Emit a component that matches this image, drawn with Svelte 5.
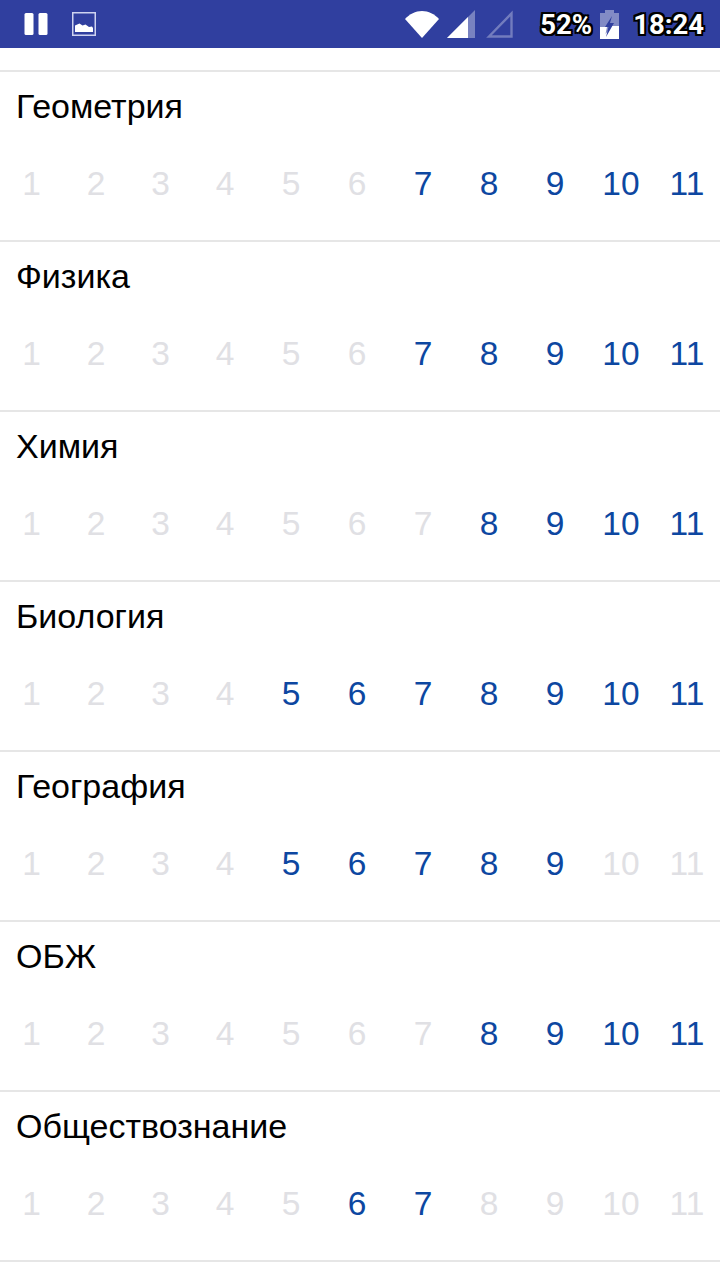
<script lang="ts">
    const subjects = [
        { name: 'Геометрия', on: [7, 8, 9, 10, 11] },
        { name: 'Физика', on: [7, 8, 9, 10, 11] },
        { name: 'Химия', on: [8, 9, 10, 11] },
        { name: 'Биология', on: [5, 6, 7, 8, 9, 10, 11] },
        { name: 'География', on: [5, 6, 7, 8, 9] },
        { name: 'ОБЖ', on: [8, 9, 10, 11] },
        { name: 'Обществознание', on: [6, 7] }
    ];
    const grades = [1, 2, 3, 4, 5, 6, 7, 8, 9, 10, 11];
</script>

<div class="screen">
    <header class="status">
        <div class="left">
            <svg width="24" height="24" viewBox="0 0 24 24">
                <rect x="0.5" y="1" width="9" height="22" rx="1.5" fill="#fff" />
                <rect x="14.5" y="1" width="9" height="22" rx="1.5" fill="#fff" />
            </svg>
            <svg width="24" height="24" viewBox="0 0 24 24">
                <rect x="0.75" y="0.75" width="22.5" height="22.5" fill="none" stroke="#ced3f0" stroke-width="1.5" />
                <path d="M3 20V13.5L7.5 11.5L10.5 13.5L13.5 12.5L17 15L20 14.5L21 16V20Z" fill="#fff" />
            </svg>
        </div>
        <div class="right">
            <svg class="wifi" width="34" height="27" viewBox="0 0 34 27">
                <path d="M0 8C4.5 3 10.5 0 17 0S29.5 3 34 8L17 27Z" fill="#fff" />
            </svg>
            <svg class="signal" width="28" height="28" viewBox="0 0 28 28">
                <path d="M0 28L28 0V28Z" fill="#fff" opacity="0.35" />
                <path d="M0 28L21 7V28Z" fill="#fff" />
            </svg>
            <svg class="signal-empty" width="27" height="28" viewBox="0 0 27 28">
                <path d="M3 26.5L25.5 3.5V26.5Z" fill="none" stroke="#fff" stroke-opacity="0.32" stroke-width="2.4" />
            </svg>
            <span class="stat">52%</span>
            <svg class="batt" width="19" height="29" viewBox="0 0 19 29">
                <path d="M5 0H14V3H19V29H0V3H5Z" fill="#fff" opacity="0.4" />
                <path d="M0 17H7L5.5 24L12 16H19V29H0Z" fill="#fff" />
                <path d="M12 6L5 17H8.5L6 27L14 13H10Z" fill="#303f9f" />
            </svg>
            <span class="stat">18:24</span>
        </div>
    </header>

    <div class="list">
        {#each subjects as subject}
            <section class="row">
                <h2 class="title">{subject.name}</h2>
                <div class="grades">
                    {#each grades as g}
                        <span class="grade" class:on={subject.on.includes(g)}>{g}</span>
                    {/each}
                </div>
            </section>
        {/each}
    </div>
</div>

<style>
    :global(body) {
        margin: 0;
        background: #fff;
    }

    .screen {
        width: 720px;
        height: 1280px;
        overflow: hidden;
        background: #fff;
        font-family: "Liberation Sans", Arial, sans-serif;
    }

    .status {
        display: flex;
        justify-content: space-between;
        align-items: center;
        height: 48px;
        padding: 0 16px 0 24px;
        background: #303f9f;
    }

    .left {
        display: flex;
        align-items: center;
        gap: 24px;
    }

    .right {
        display: flex;
        align-items: center;
    }

    .wifi {
        margin-right: 8px;
    }

    .signal {
        margin-right: 11px;
    }

    .signal-empty {
        margin-right: 27px;
    }

    .batt {
        margin: 0 14px 0 8px;
    }

    .stat {
        font-family: Roboto, sans-serif;
        font-weight: 700;
        font-size: 27.5px;
        color: #fff;
        text-shadow:
            -2px -2px 0 #000, 0 -2px 0 #000, 2px -2px 0 #000,
            -2px 0 0 #000, 2px 0 0 #000,
            -2px 2px 0 #000, 0 2px 0 #000, 2px 2px 0 #000;
    }

    .list {
        padding-top: 22px;
    }

    .row {
        height: 168px;
        border-top: 2px solid #e6e6e6;
    }

    .row:last-child {
        border-bottom: 2px solid #e6e6e6;
    }

    .title {
        margin: 0;
        padding: 16px 16px 0;
        font-size: 34px;
        line-height: 37px;
        font-weight: 400;
        color: #000;
    }

    .grades {
        display: grid;
        grid-template-columns: 63px 66px 63px repeat(8, 66px);
        padding-top: 40px;
    }

    .grade {
        display: flex;
        justify-content: center;
        font-size: 33.5px;
        line-height: 38px;
        color: #e0e0e4;
    }

    .grade.on {
        color: #0d47a1;
    }
</style>
